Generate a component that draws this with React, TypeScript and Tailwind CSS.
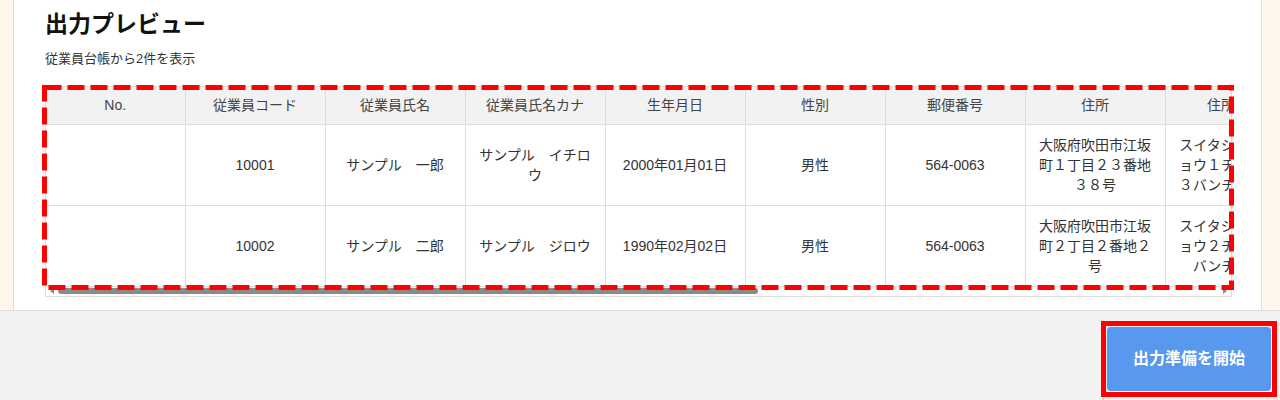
const columns = [
  "No.",
  "従業員コード",
  "従業員氏名",
  "従業員氏名カナ",
  "生年月日",
  "性別",
  "郵便番号",
  "住所",
  "住所カナ",
  "電話番号",
  "メールアドレス",
  "入社日",
  "部署",
  "役職",
]

const rows = [
  [
    "",
    "10001",
    "サンプル　一郎",
    "サンプル　イチロウ",
    "2000年01月01日",
    "男性",
    "564-0063",
    "大阪府吹田市江坂町１丁目２３番地３８号",
    "スイタシエサカチョウ１チョウメ２３バンチ３８ゴウ",
    "06-0000-0001",
    "ichiro@example.jp",
    "2020年04月01日",
    "総務部",
    "主任",
  ],
  [
    "",
    "10002",
    "サンプル　二郎",
    "サンプル　ジロウ",
    "1990年02月02日",
    "男性",
    "564-0063",
    "大阪府吹田市江坂町２丁目２番地２号",
    "スイタシエサカチョウ２チョウメ２バンチ２ゴウ",
    "06-0000-0002",
    "jiro@example.jp",
    "2015年04月01日",
    "営業部",
    "課長",
  ],
]

function PreviewTable() {
  return (
    <div className="relative mt-[18px] border border-[#dddddd]">
      <div className="overflow-hidden">
        <table className="table-fixed border-collapse w-[1959px]">
          <thead>
            <tr className="bg-[#f2f2f2]">
              {columns.map((col, j) => (
                <th
                  key={col}
                  className={
                    (j === 0 ? "w-[139px] " : "w-[140px] ") +
                    "h-[37px] border-r border-b border-[#dddddd] text-[14px] font-normal text-[#444444] text-center"
                  }
                >
                  {col}
                </th>
              ))}
            </tr>
          </thead>
          <tbody>
            {rows.map((row, i) => (
              <tr key={i}>
                {row.map((cell, j) => (
                  <td
                    key={j}
                    className="h-[81px] border-r border-b border-[#dddddd] px-[10px] py-[10px] text-center align-middle text-[14px] leading-[20px] text-[#333333]"
                  >
                    <div className="max-h-[60px] overflow-hidden">{cell}</div>
                  </td>
                ))}
              </tr>
            ))}
          </tbody>
        </table>
      </div>

      {/* scrollbar */}
      <div className="flex items-center h-[9px] bg-white">
        <div className="w-[12px] flex justify-center">
          <div className="w-0 h-0 border-y-[3px] border-y-transparent border-r-[4px] border-r-[#8a8a8a]" />
        </div>
        <div className="w-[700px] h-[6px] rounded-[3px] bg-[#8a8a8a]" />
        <div className="flex-1" />
        <div className="w-[12px] flex justify-center">
          <div className="w-0 h-0 border-y-[3px] border-y-transparent border-l-[4px] border-l-[#8a8a8a]" />
        </div>
      </div>

      {/* annotation */}
      <svg
        className="absolute -left-[4px] -top-[2px] pointer-events-none"
        width="1192"
        height="205"
        viewBox="0 0 1192 205"
      >
        <rect
          x="2.5"
          y="2.5"
          width="1187"
          height="200"
          fill="none"
          stroke="#ff0000"
          strokeWidth="5"
          strokeDasharray="17 6"
        />
      </svg>
    </div>
  )
}

function App() {
  return (
    <div
      className="min-h-screen bg-[#fdf6eb] text-[#333333]"
      style={{ fontFamily: '"Liberation Sans", "Noto Sans CJK JP", sans-serif' }}
    >
      <main className="ml-[13px] mr-[18px] bg-white border-x border-[#e6ded3] pl-[31px] pr-[29px] pt-[9px] pb-[13px]">
        <h1 className="text-[23px] leading-[30px] font-bold text-[#111111]">出力プレビュー</h1>
        <p className="mt-[11px] text-[13px] leading-[18px] text-[#333333]">従業員台帳から2件を表示</p>
        <PreviewTable />
      </main>

      <footer className="h-[90px] border-t border-[#dcdcdc] bg-[#f2f2f2] flex justify-end pt-[10px] pr-[3px]">
        <div className="h-[76px] border-[5px] border-[#ff0000] p-px bg-[#eef3fb]">
          <button className="w-[164px] h-[64px] rounded-[4px] bg-[#5898ee] text-white text-[16px] font-bold">
            出力準備を開始
          </button>
        </div>
      </footer>
    </div>
  )
}

export default App
